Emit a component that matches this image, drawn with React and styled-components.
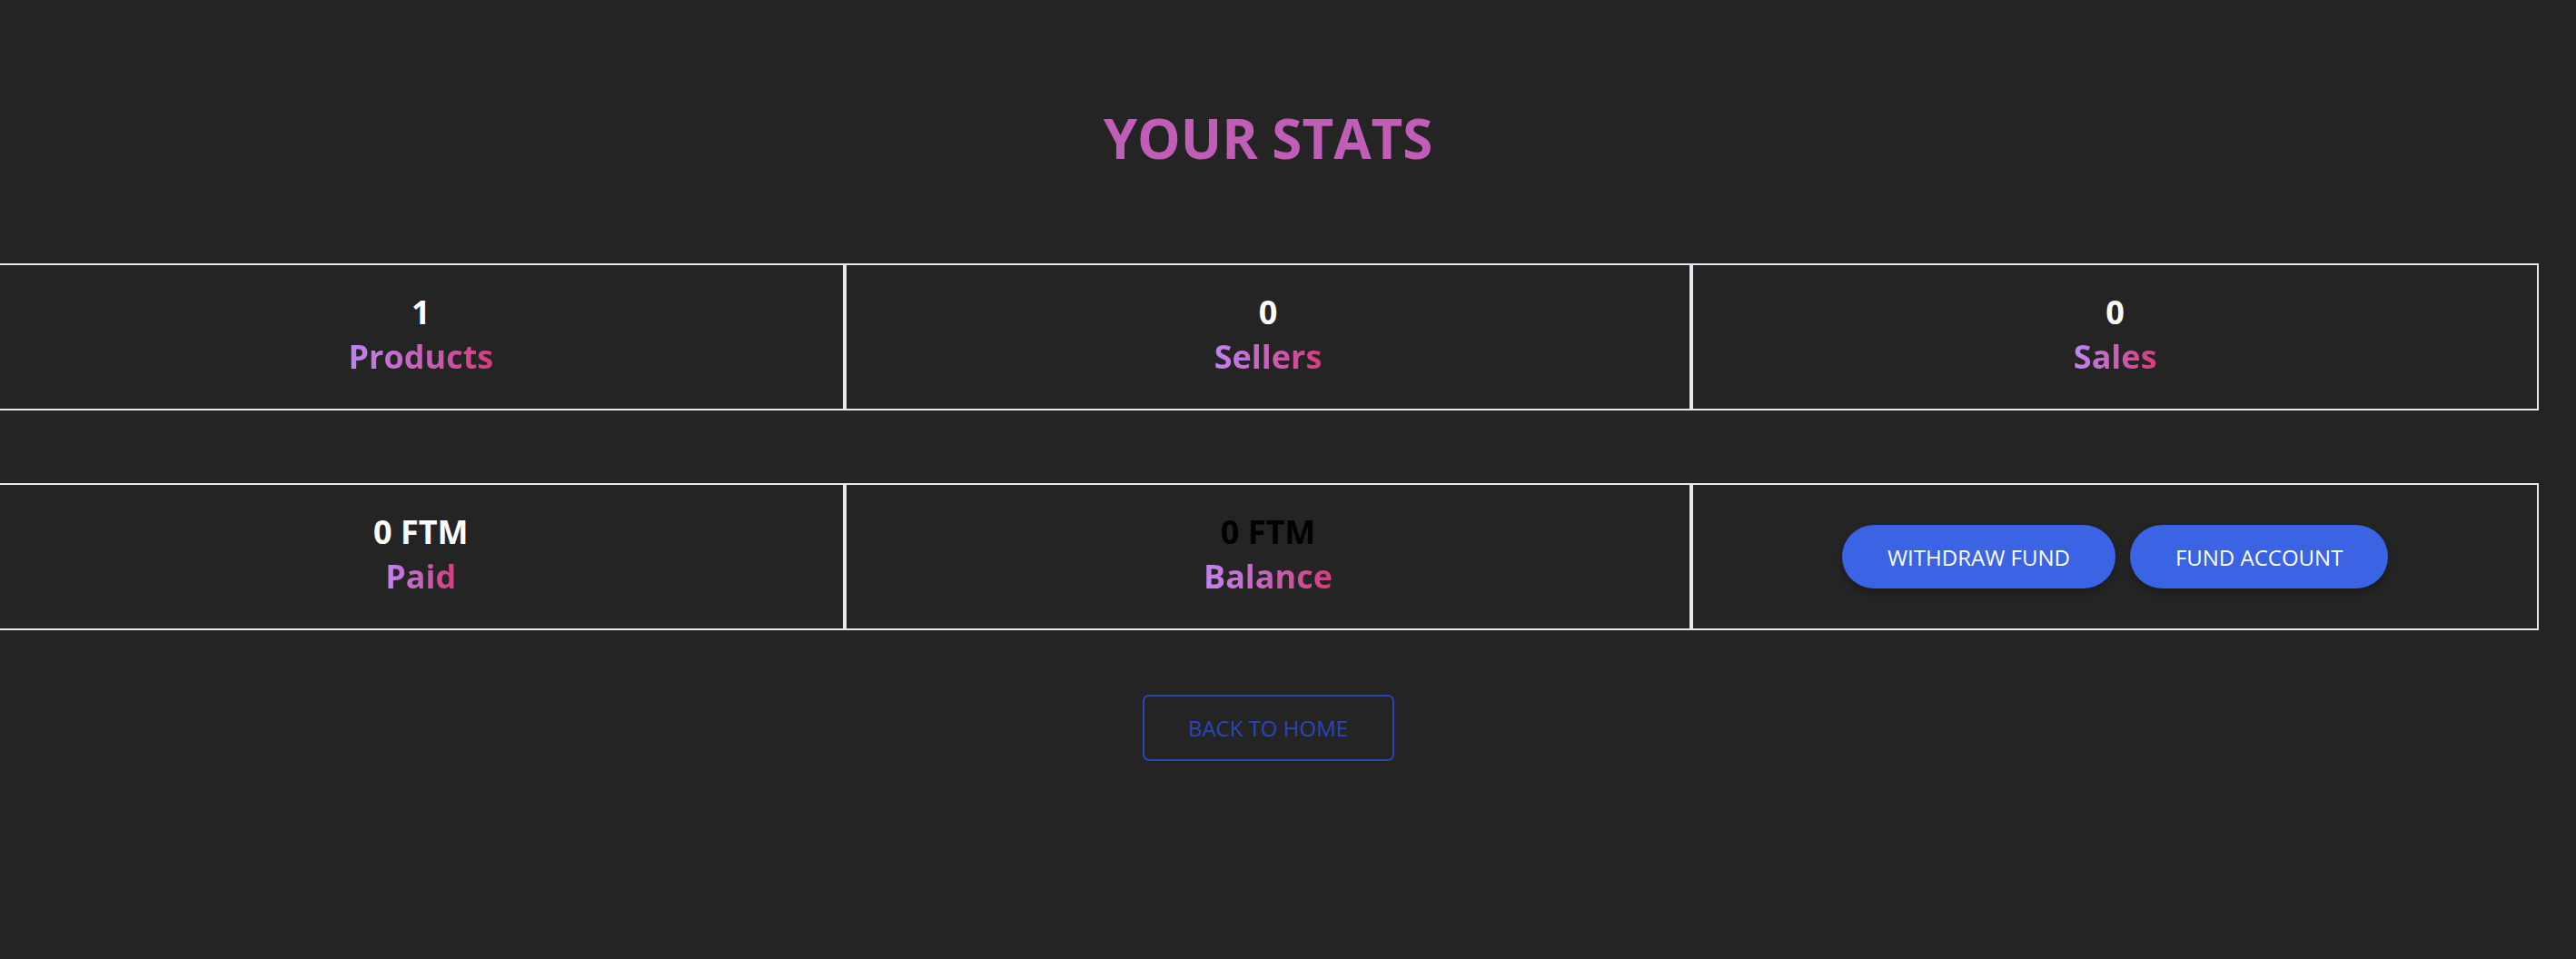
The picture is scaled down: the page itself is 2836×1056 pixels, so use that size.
import React from 'react';
import styled, { createGlobalStyle } from "styled-components";

const GlobalStyle = createGlobalStyle`
  html, body {
    margin: 0;
    padding: 0;
    background: #242424;
    font-family: "Open Sans", "Noto Sans", sans-serif;
    overflow-x: hidden;
  }
`

const Page = styled.div`
  width: 2798px;
  margin-left: -3px;
  padding-top: 111px;
  padding-bottom: 120px;
  display: flex;
  flex-direction: column;
  align-items: center;
`

const Title = styled.h1`
  margin: 0 0 97px;
  font-size: 60px;
  line-height: 82px;
  font-weight: 700;
  color: #c05db6;
`

const StatRow = styled.div`
  width: 100%;
  display: grid;
  grid-template-columns: repeat(3, 1fr);
  margin-bottom: ${props => props.gap || 0}px;
`

const Cell = styled.div`
  box-sizing: border-box;
  height: 162px;
  border: 2px solid #e8e8ee;
  display: flex;
  flex-direction: column;
  align-items: center;
  justify-content: center;
  padding-bottom: 6px;
`

const Value = styled.div`
  font-size: 36px;
  line-height: 49px;
  font-weight: 700;
  color: ${props => props.dark ? '#000' : '#fff'};
`

const Label = styled.div`
  font-size: 36px;
  line-height: 49px;
  font-weight: 700;
  background: linear-gradient(90deg, #c084f2 0%, #c563b8 50%, #d63b7b 100%);
  -webkit-background-clip: text;
  background-clip: text;
  color: transparent;
`

const Actions = styled.div`
  display: flex;
  gap: 16px;
  padding-top: 6px;
`

const PillButton = styled.button`
  height: 70px;
  padding: 0 50px;
  border: none;
  border-radius: 35px;
  background: #3a64e4;
  color: #fff;
  font-family: "Open Sans", sans-serif;
  font-size: 24px;
  box-shadow: 0 4px 10px rgba(0, 0, 0, 0.25);
  cursor: pointer;
`

const OutlineButton = styled.button`
  width: 277px;
  height: 73px;
  border: 2px solid #2b45b8;
  border-radius: 7px;
  background: transparent;
  color: #2b45b8;
  font-family: "Open Sans", sans-serif;
  font-size: 24px;
  cursor: pointer;
`

const Stat = ({ value, label, dark }) => (
    <Cell>
        <Value dark={dark}>{value}</Value>
        <Label>{label}</Label>
    </Cell>
);

const App = () => {
    return (
        <>
            <GlobalStyle/>
            <Page>
                <Title>YOUR STATS</Title>
                <StatRow gap={80}>
                    <Stat value="1" label="Products"/>
                    <Stat value="0" label="Sellers"/>
                    <Stat value="0" label="Sales"/>
                </StatRow>
                <StatRow gap={71}>
                    <Stat value="0 FTM" label="Paid"/>
                    <Stat value="0 FTM" label="Balance" dark/>
                    <Cell>
                        <Actions>
                            <PillButton>WITHDRAW FUND</PillButton>
                            <PillButton>FUND ACCOUNT</PillButton>
                        </Actions>
                    </Cell>
                </StatRow>
                <OutlineButton>BACK TO HOME</OutlineButton>
            </Page>
        </>
    );
};

export default App;
